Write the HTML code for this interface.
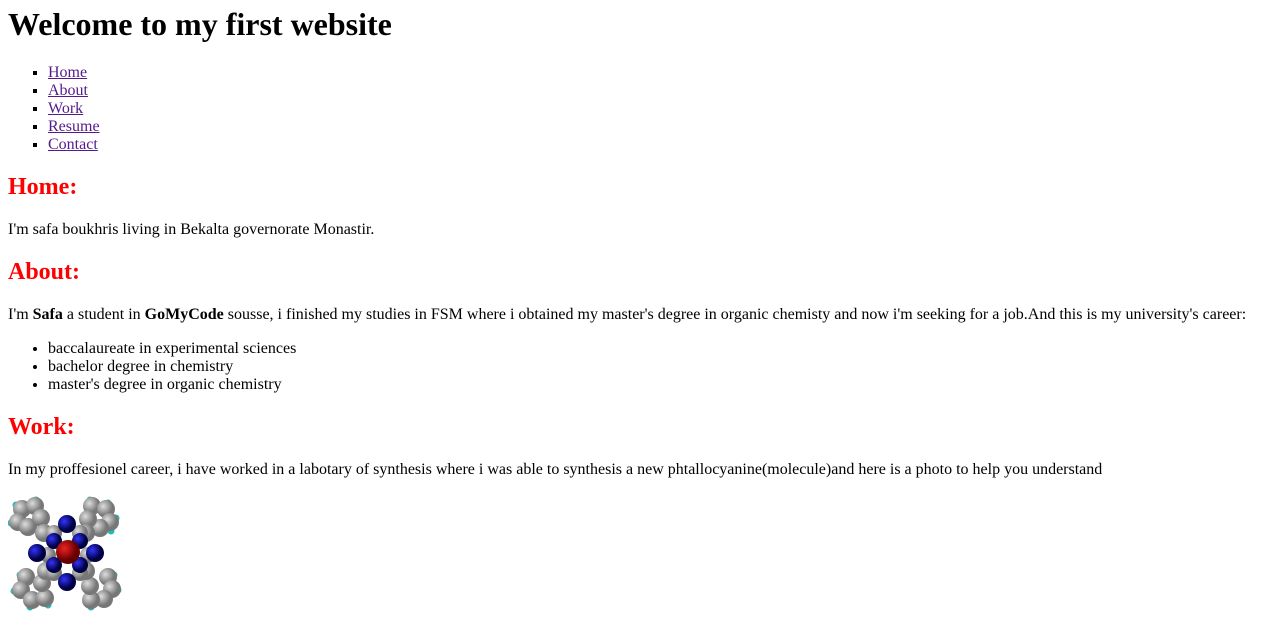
<!DOCTYPE html>
<html><head><meta charset="utf-8"><style>
body{margin:6px 8px 8px;font-family:"Liberation Serif",serif;font-size:16px;color:#000;background:#fff}
h1{font-size:32px;margin:0 0 21px}
h2{color:red;font-size:24px;margin:20px 0}
ul.nav{list-style:square}
ul{margin:16px 0;padding-left:40px}
a{color:#551A8B}
p{margin:16px 0}
svg{display:block}
</style></head><body>
<h1>Welcome to my first website</h1>
<ul class="nav">
<li><a href="#">Home</a></li>
<li><a href="#">About</a></li>
<li><a href="#">Work</a></li>
<li><a href="#">Resume</a></li>
<li><a href="#">Contact</a></li>
</ul>
<h2>Home:</h2>
<p>I'm safa boukhris living in Bekalta governorate Monastir.</p>
<h2>About:</h2>
<p>I'm <b>Safa</b> a student in <b>GoMyCode</b> sousse, i finished my studies in FSM where i obtained my master's degree in organic chemisty and now i'm seeking for a job.And this is my university's career:</p>
<ul>
<li>baccalaureate in experimental sciences</li>
<li>bachelor degree in chemistry</li>
<li>master's degree in organic chemistry</li>
</ul>
<h2>Work:</h2>
<p>In my proffesionel career, i have worked in a labotary of synthesis where i was able to synthesis a new phtallocyanine(molecule)and here is a photo to help you understand</p>
<svg width="115" height="118" viewBox="0 0 115 118">
<defs>
<radialGradient id="g" cx="35%" cy="35%"><stop offset="0" stop-color="#ddd"/><stop offset="1" stop-color="#777"/></radialGradient>
<radialGradient id="b" cx="35%" cy="35%"><stop offset="0" stop-color="#33f"/><stop offset="1" stop-color="#004"/></radialGradient>
<radialGradient id="r" cx="35%" cy="35%"><stop offset="0" stop-color="#e22"/><stop offset="1" stop-color="#600"/></radialGradient>
</defs>
<g fill="#2bb">
<circle cx="8" cy="10" r="3.5"/><circle cx="28" cy="5" r="3.5"/><circle cx="3" cy="28" r="3.5"/><circle cx="18" cy="36" r="3.5"/>
<circle cx="82" cy="5" r="3.5"/><circle cx="100" cy="8" r="3.5"/><circle cx="108" cy="23" r="3.5"/><circle cx="103" cy="36" r="3.5"/>
<circle cx="12" cy="80" r="3.5"/><circle cx="6" cy="96" r="3.5"/><circle cx="22" cy="112" r="3.5"/><circle cx="40" cy="110" r="3.5"/>
<circle cx="106" cy="80" r="3.5"/><circle cx="110" cy="95" r="3.5"/><circle cx="100" cy="108" r="3.5"/><circle cx="83" cy="112" r="3.5"/>
</g>
<g fill="url(#g)">
<circle cx="14" cy="14" r="9"/><circle cx="27" cy="11" r="9"/><circle cx="10" cy="27" r="9"/><circle cx="20" cy="32" r="9"/><circle cx="33" cy="23" r="9"/><circle cx="36" cy="38" r="9"/>
<circle cx="84" cy="11" r="9"/><circle cx="98" cy="14" r="9"/><circle cx="102" cy="27" r="9"/><circle cx="92" cy="33" r="9"/><circle cx="80" cy="24" r="9"/><circle cx="78" cy="38" r="9"/>
<circle cx="18" cy="82" r="9"/><circle cx="13" cy="95" r="9"/><circle cx="24" cy="105" r="9"/><circle cx="37" cy="103" r="9"/><circle cx="34" cy="88" r="9"/><circle cx="38" cy="76" r="9"/>
<circle cx="100" cy="82" r="9"/><circle cx="104" cy="94" r="9"/><circle cx="96" cy="104" r="9"/><circle cx="83" cy="105" r="9"/><circle cx="82" cy="91" r="9"/><circle cx="78" cy="76" r="9"/>
<circle cx="46" cy="38" r="8"/><circle cx="72" cy="38" r="8"/><circle cx="40" cy="60" r="8"/><circle cx="80" cy="60" r="8"/>
<circle cx="46" cy="78" r="8"/><circle cx="72" cy="78" r="8"/>
</g>
<g fill="url(#b)">
<circle cx="59" cy="29" r="9"/><circle cx="29" cy="58" r="9"/><circle cx="87" cy="58" r="9"/><circle cx="59" cy="87" r="9"/>
<circle cx="46" cy="46" r="8"/><circle cx="72" cy="46" r="8"/><circle cx="46" cy="70" r="8"/><circle cx="72" cy="70" r="8"/>
</g>
<circle cx="60" cy="57" r="12" fill="url(#r)"/>
</svg>
</body></html>
